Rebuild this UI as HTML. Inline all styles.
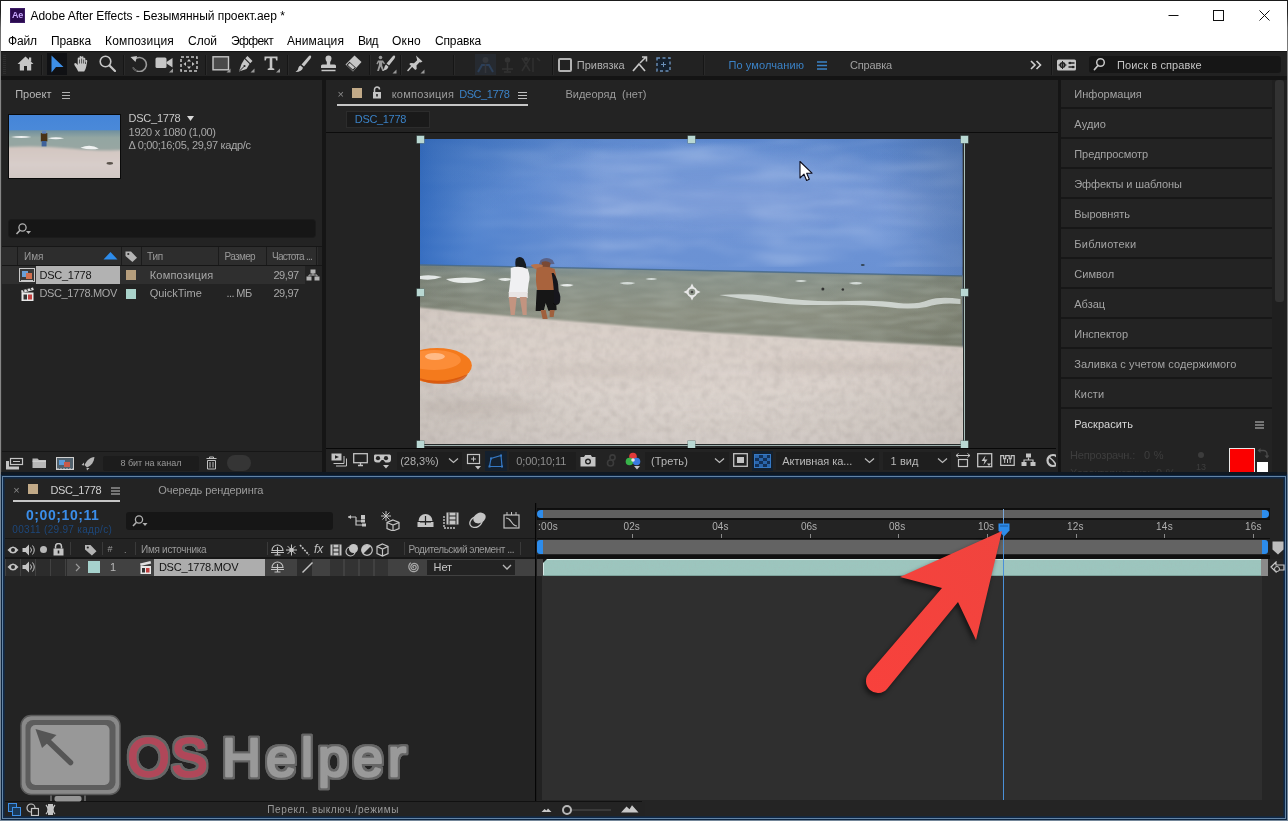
<!DOCTYPE html>
<html lang="ru"><head><meta charset="utf-8"><title>Adobe After Effects</title>
<style>

*{margin:0;padding:0;box-sizing:border-box}
html,body{width:1288px;height:821px;overflow:hidden;background:#151515}
body{font-family:"Liberation Sans",sans-serif}
#app{position:relative;width:1288px;height:821px;overflow:hidden;background:#151515;will-change:transform}
.b{position:absolute;display:block}
.t{position:absolute;white-space:nowrap;display:block}

</style></head>
<body>
<div id="app">
<div class="b" style="left:0px;top:0px;width:1288px;height:821px;background:#1b1b1b;"></div>
<div class="b" style="left:0px;top:0px;width:1288px;height:821px;background:#1b1b1b;background:linear-gradient(to bottom,#1b1b1b 0,#1f1f1f 12px,#6a6a6a 28px,#868686 60px,#868686 100%);"></div>
<div class="b" style="left:1px;top:0px;width:1286px;height:1px;background:#1b1b1b;"></div>
<div class="b" style="left:1px;top:51px;width:1286px;height:769px;background:#151515;"></div>
<div class="b" style="left:1px;top:1px;width:1286px;height:50px;background:#ffffff;"></div>
<div class="b" style="left:10px;top:8px;width:15px;height:15px;background:#2a0a4f;border:1px solid #3d1c66"></div>
<span class="t" style="left:12px;top:9px;font-size:9px;line-height:12px;color:#c9a9ff;font-weight:700;letter-spacing:-0.25px;">Ae</span>
<span class="t" style="left:30.5px;top:8px;font-size:12px;line-height:16px;color:#000;letter-spacing:-0.03px;">Adobe After Effects - Безымянный проект.aep *</span>
<svg class="b" style="left:1160px;top:1px;" width="128" height="30" viewBox="0 0 128 30"><path d="M8.5 14.5h10" stroke="#111" fill="none"/><rect x="53.5" y="9.5" width="10" height="10" stroke="#111" fill="none"/><path d="M99.5 9.5l10 10m0-10l-10 10" stroke="#111" fill="none"/></svg>
<span class="t" style="left:8px;top:33px;font-size:12px;line-height:16px;color:#000;letter-spacing:-0.13px;">Файл</span>
<span class="t" style="left:51px;top:33px;font-size:12px;line-height:16px;color:#000;letter-spacing:-0.09px;">Правка</span>
<span class="t" style="left:105px;top:33px;font-size:12px;line-height:16px;color:#000;letter-spacing:0.18px;">Композиция</span>
<span class="t" style="left:188px;top:33px;font-size:12px;line-height:16px;color:#000;letter-spacing:-0.04px;">Слой</span>
<span class="t" style="left:231px;top:33px;font-size:12px;line-height:16px;color:#000;letter-spacing:-0.65px;">Эффект</span>
<span class="t" style="left:287px;top:33px;font-size:12px;line-height:16px;color:#000;letter-spacing:0.08px;">Анимация</span>
<span class="t" style="left:358px;top:33px;font-size:12px;line-height:16px;color:#000;letter-spacing:-0.57px;">Вид</span>
<span class="t" style="left:392px;top:33px;font-size:12px;line-height:16px;color:#000;letter-spacing:0.28px;">Окно</span>
<span class="t" style="left:435px;top:33px;font-size:12px;line-height:16px;color:#000;letter-spacing:-0.15px;">Справка</span>
<div class="b" style="left:1px;top:51px;width:1286px;height:25px;background:#222222;"></div>
<div class="b" style="left:1px;top:76px;width:1286px;height:4px;background:#141414;"></div>
<div class="b" style="left:1px;top:51px;width:1286px;height:1px;background:#141414;"></div>
<div class="b" style="left:3px;top:55px;width:3px;height:1px;background:#2e2e2e;"></div>
<div class="b" style="left:3px;top:57px;width:3px;height:1px;background:#2e2e2e;"></div>
<div class="b" style="left:3px;top:59px;width:3px;height:1px;background:#2e2e2e;"></div>
<div class="b" style="left:3px;top:61px;width:3px;height:1px;background:#2e2e2e;"></div>
<div class="b" style="left:3px;top:63px;width:3px;height:1px;background:#2e2e2e;"></div>
<div class="b" style="left:3px;top:65px;width:3px;height:1px;background:#2e2e2e;"></div>
<div class="b" style="left:3px;top:67px;width:3px;height:1px;background:#2e2e2e;"></div>
<div class="b" style="left:3px;top:69px;width:3px;height:1px;background:#2e2e2e;"></div>
<div class="b" style="left:3px;top:71px;width:3px;height:1px;background:#2e2e2e;"></div>
<div class="b" style="left:3px;top:73px;width:3px;height:1px;background:#2e2e2e;"></div>
<div class="b" style="left:41px;top:55px;width:1px;height:20px;background:#161616;"></div>
<div class="b" style="left:42px;top:55px;width:1px;height:20px;background:#2a2a2a;"></div>
<div class="b" style="left:123px;top:55px;width:1px;height:20px;background:#161616;"></div>
<div class="b" style="left:124px;top:55px;width:1px;height:20px;background:#2a2a2a;"></div>
<div class="b" style="left:205px;top:55px;width:1px;height:20px;background:#161616;"></div>
<div class="b" style="left:206px;top:55px;width:1px;height:20px;background:#2a2a2a;"></div>
<div class="b" style="left:287px;top:55px;width:1px;height:20px;background:#161616;"></div>
<div class="b" style="left:288px;top:55px;width:1px;height:20px;background:#2a2a2a;"></div>
<div class="b" style="left:369px;top:55px;width:1px;height:20px;background:#161616;"></div>
<div class="b" style="left:370px;top:55px;width:1px;height:20px;background:#2a2a2a;"></div>
<div class="b" style="left:400px;top:55px;width:1px;height:20px;background:#161616;"></div>
<div class="b" style="left:401px;top:55px;width:1px;height:20px;background:#2a2a2a;"></div>
<div class="b" style="left:453px;top:55px;width:1px;height:20px;background:#161616;"></div>
<div class="b" style="left:454px;top:55px;width:1px;height:20px;background:#2a2a2a;"></div>
<div class="b" style="left:552px;top:55px;width:1px;height:20px;background:#161616;"></div>
<div class="b" style="left:553px;top:55px;width:1px;height:20px;background:#2a2a2a;"></div>
<div class="b" style="left:703px;top:55px;width:1px;height:20px;background:#161616;"></div>
<div class="b" style="left:704px;top:55px;width:1px;height:20px;background:#2a2a2a;"></div>
<div class="b" style="left:1051px;top:55px;width:1px;height:20px;background:#161616;"></div>
<div class="b" style="left:1052px;top:55px;width:1px;height:20px;background:#2a2a2a;"></div>
<svg class="b" style="left:17px;top:56px;" width="17" height="15" viewBox="0 0 17 15"><path d="M8.500 0.500L0.500 8h2.300v6.500h4.200v-4.500h3v4.500h4.200v-6.500h2.300z" fill="#c6c6c6"/><rect x="12" y="1.500" width="2.200" height="4" fill="#c6c6c6"/></svg>
<div class="b" style="left:47px;top:53px;width:20px;height:22px;background:#101114;"></div>
<svg class="b" style="left:51px;top:55px;" width="13" height="18" viewBox="0 0 13 18"><path d="M0.500 0.500v17l4.500-5.500h7.500z" fill="#3d8fe8"/></svg>
<svg class="b" style="left:74px;top:55px;" width="16" height="17" viewBox="0 0 16 17"><path d="M4.200 16.500q-1.200-2.800-3.500-6q-1-1.800.3-2.400q1.200-.2 2.700 2v-6.300q0-1.200.9-1.200t.9 1.200v-1.600q0-1.200 1-1.200t1 1.200v.3q0-1.200 1-1.200t1 1.200v1.300q0-1.100.9-1.100t.9 1.100v2.200q.3-1.200 1.200-1t.7 1.400l-.8 4.600q-.5 3-2.200 5.500z" fill="#c6c6c6"/><path d="M5.500 4.500v4M7.600 3.500v5M9.600 4.500v4M11.500 6.500v2.500" stroke="#232323" stroke-width=".7"/></svg>
<svg class="b" style="left:99px;top:55px;" width="17" height="17" viewBox="0 0 17 17"><circle cx="6.500" cy="6.500" r="5.300" fill="none" stroke="#c6c6c6" stroke-width="1.600"/><path d="M10.500 10.500l5.500 5.500" stroke="#c6c6c6" stroke-width="2.200" stroke-linecap="round"/></svg>
<svg class="b" style="left:130px;top:55px;" width="18" height="17" viewBox="0 0 18 17"><path d="M4.500 4.500a7 7 0 1 1-1.500 8" fill="none" stroke="#9a9a9a" stroke-width="1.600"/><path d="M0.500 2l6.500-1-1.500 6z" fill="#c6c6c6"/><path d="M3 12.500a7 7 0 0 0 4 3.500" fill="none" stroke="#555" stroke-width="1.600"/></svg>
<svg class="b" style="left:155px;top:56px;" width="19" height="17" viewBox="0 0 19 17"><rect x="0.500" y="1.500" width="11" height="10.500" rx="1.500" fill="#c6c6c6"/><path d="M11.500 6l6-4v9.500l-6-4z" fill="#c6c6c6"/><path d="M14 16.500h4v-4z" fill="#9a9a9a"/></svg>
<svg class="b" style="left:180px;top:56px;" width="18" height="16" viewBox="0 0 18 16"><rect x="1" y="1" width="16" height="14" fill="none" stroke="#c6c6c6" stroke-width="1.500" stroke-dasharray="3 2"/><path d="M9 3l2 2.500h-4zM9 13l2-2.500h-4zM3.500 8l2.500-2v4zM14.500 8l-2.500-2v4z" fill="#c6c6c6"/></svg>
<svg class="b" style="left:212px;top:56px;" width="19" height="17" viewBox="0 0 19 17"><rect x="1" y="0.800" width="15.500" height="13" fill="#4a4a4a" stroke="#c6c6c6" stroke-width="1.400"/><path d="M14.500 16.500h4v-4z" fill="#9a9a9a"/></svg>
<svg class="b" style="left:238px;top:55px;" width="17" height="18" viewBox="0 0 17 18"><path d="M9.500 1l5 5-2.200 2.200-5-5z" fill="#c6c6c6"/><path d="M6.500 4l5 5-3 5-7.500 2.500 2.500-7.500z" fill="#c6c6c6"/><path d="M1.500 16l4.500-4.500" stroke="#232323" stroke-width="1"/><circle cx="6.500" cy="11" r="1.100" fill="#232323"/><path d="M12.500 17.500h4v-4z" fill="#9a9a9a"/></svg>
<svg class="b" style="left:264px;top:56px;" width="16" height="17" viewBox="0 0 16 17"><path d="M0.500 0.500h13v4h-1.300l-.7-2.200h-3.200v9.700l2 .7v1.300h-6.600v-1.300l2-.7v-9.700h-3.200l-.7 2.200h-1.300z" fill="#c6c6c6"/><path d="M12 16.500h4v-4z" fill="#9a9a9a"/></svg>
<svg class="b" style="left:295px;top:55px;" width="17" height="18" viewBox="0 0 17 18"><path d="M15.500 0.500q1.500 1 0 3l-6.500 8-2.500-2 7-8q1-1.500 2-1z" fill="#c6c6c6"/><path d="M5.500 10.500l2.500 2.200q-1 4-7.500 4.300q3-2 3-4.500q.5-1.500 2-2z" fill="#c6c6c6"/></svg>
<svg class="b" style="left:320px;top:55px;" width="17" height="17" viewBox="0 0 17 17"><path d="M8.500 0.500a3 3 0 0 1 3 3q0 1.500-1.300 3.500v2.500h4.300q1.500 0 1.500 1.500v2h-15v-2q0-1.500 1.500-1.500h4.300v-2.500q-1.300-2-1.300-3.500a3 3 0 0 1 3-3z" fill="#c6c6c6"/><path d="M1.500 15.500h14" stroke="#c6c6c6" stroke-width="1.500"/></svg>
<svg class="b" style="left:345px;top:55px;" width="17" height="17" viewBox="0 0 17 17"><path d="M9.500 0.500l7 6.500-8.500 9.500-7.500-7z" fill="#c6c6c6"/><path d="M1.500 10l3-3.200 6.500 6-3 3.200z" fill="#232323"/><path d="M2.800 10l2-2 5 4.600-2 2z" fill="#c6c6c6"/></svg>
<svg class="b" style="left:376px;top:55px;" width="21" height="19" viewBox="0 0 21 19"><circle cx="4.500" cy="2.500" r="1.800" fill="#9a9a9a"/><path d="M2 5.500h5l2 3-1 .8-1.800-2v3.200l2 5.500h-1.800l-2-4.500-1.500 4.500h-1.800l1.800-6v-3l-1.500 2.500-1-.8z" fill="#9a9a9a"/><path d="M18.500 0.500q1.500 1 0 3l-5.500 7-2.500-2 6-7q1-1.500 2-1z" fill="#c6c6c6"/><path d="M10 9.500l2.500 2.200q-1 3.500-6 3.800q2-1.500 2-3.500q.3-1.500 1.500-2.500z" fill="#c6c6c6"/><path d="M16.500 18.500h4v-4z" fill="#9a9a9a"/></svg>
<svg class="b" style="left:407px;top:55px;" width="18" height="19" viewBox="0 0 18 19"><path d="M9 0.500l6.500 6-1.800 1-1.200-.3-3 3.300.2 3.500-1.500 1-6-6 1.500-1 3.300.3 3.200-3-.3-1.300z" fill="#c6c6c6"/><path d="M5 11l-4 4.500" stroke="#c6c6c6" stroke-width="1.500" stroke-linecap="round"/><path d="M13.500 18.500h4v-4z" fill="#9a9a9a"/></svg>
<div class="b" style="left:475px;top:54px;width:21px;height:21px;background:#262a30;"></div>
<svg class="b" style="left:476px;top:55px;" width="19" height="19" viewBox="0 0 19 19"><circle cx="9.500" cy="5" r="3" fill="#34373c"/><path d="M2 17l4-7h7l4 7" fill="none" stroke="#2c3f58" stroke-width="2"/><path d="M9.500 9v9" stroke="#34373c" stroke-width="1.500"/></svg>
<svg class="b" style="left:500px;top:55px;" width="15" height="19" viewBox="0 0 15 19"><circle cx="7.500" cy="5" r="2.800" fill="#333"/><path d="M2 14h11M7.500 8v8M4 17h7" stroke="#333" stroke-width="1.600" fill="none"/></svg>
<svg class="b" style="left:519px;top:55px;" width="22" height="19" viewBox="0 0 22 19"><path d="M3 3l8 13M11 3l-8 13M14 3v14M18 3l3 3" stroke="#303030" stroke-width="1.600" fill="none"/><circle cx="7" cy="4" r="2" fill="#333"/></svg>
<div class="b" style="left:558px;top:58px;width:14px;height:14px;border:2px solid #b2b2b2;border-radius:2px"></div>
<span class="t" style="left:576.8px;top:58px;font-size:11px;line-height:14px;color:#b0b0b0;letter-spacing:-0.03px;">Привязка</span>
<svg class="b" style="left:631px;top:56px;" width="17" height="17" viewBox="0 0 17 17"><path d="M2 15l6-7 6 7" fill="none" stroke="#c6c6c6" stroke-width="1.700"/><path d="M9 7l6-6M11 1h4.500v4.500" fill="none" stroke="#c6c6c6" stroke-width="1.500"/></svg>
<svg class="b" style="left:656px;top:57px;" width="15" height="15" viewBox="0 0 15 15"><rect x="1" y="1" width="13" height="13" fill="#14202e" stroke="#6a8fb8" stroke-width="1.400" stroke-dasharray="3 2.500"/><path d="M5 7.500h5M7.500 5v5" stroke="#6a8fb8"/></svg>
<span class="t" style="left:728.5px;top:58px;font-size:11px;line-height:14px;color:#3b82c6;letter-spacing:0.09px;">По умолчанию</span>
<svg class="b" style="left:817px;top:61px;" width="10" height="9" viewBox="0 0 10 9"><path d="M0 1h10M0 4.500h10M0 8h10" stroke="#3b82c6" stroke-width="1.300"/></svg>
<span class="t" style="left:850px;top:58px;font-size:11px;line-height:14px;color:#a0a0a0;letter-spacing:-0.16px;">Справка</span>
<svg class="b" style="left:1030px;top:60px;" width="12" height="10" viewBox="0 0 12 10"><path d="M1 1l4 4-4 4M6.500 1l4 4-4 4" fill="none" stroke="#d0d0d0" stroke-width="1.600"/></svg>
<svg class="b" style="left:1057px;top:59px;" width="20" height="12" viewBox="0 0 20 12"><rect x="0" y="0.500" width="19" height="11" rx="1.500" fill="#c6c6c6"/><circle cx="5.500" cy="6" r="2.300" fill="none" stroke="#232323" stroke-width="1.500"/><path d="M5.500 2v8M1.500 6h8" stroke="#232323" stroke-width="1"/><path d="M11.500 4h6M11.500 8h6" stroke="#232323" stroke-width="1.400"/><circle cx="13" cy="4" r="1.200" fill="#232323"/><circle cx="16" cy="8" r="1.200" fill="#232323"/></svg>
<div class="b" style="left:1089px;top:56px;width:192px;height:17px;background:#161616;border-radius:3px"></div>
<svg class="b" style="left:1093px;top:57px;" width="13" height="14" viewBox="0 0 13 14"><circle cx="7.500" cy="5.500" r="3.800" fill="none" stroke="#c6c6c6" stroke-width="1.500"/><path d="M5 8.500l-3.500 4" stroke="#c6c6c6" stroke-width="1.800" stroke-linecap="round"/></svg>
<span class="t" style="left:1117px;top:58px;font-size:11px;line-height:14px;color:#c4c4c4;letter-spacing:0.12px;">Поиск в справке</span>
<div class="b" style="left:1px;top:80px;width:1px;height:392px;background:#2e2e2e;"></div>
<div class="b" style="left:2px;top:80px;width:320px;height:392px;background:#232323;"></div>
<span class="t" style="left:15.2px;top:87px;font-size:11px;line-height:14px;color:#b8b8b8;letter-spacing:0.01px;">Проект</span>
<svg class="b" style="left:62px;top:91px;" width="9" height="8" viewBox="0 0 9 8"><path d="M0 1.5h8M0 4.5h8M0 7.5h8" stroke="#b0b0b0" stroke-width="1"/></svg>
<div class="b" style="left:8px;top:114px;width:113px;height:65px;background:#0a0a0a;"></div>
<svg class="b" style="left:9px;top:115px" width="111" height="63" viewBox="0 0 544 305" preserveAspectRatio="none"><defs><linearGradient id="tsky" x1="0" y1="0" x2="0" y2="1"><stop offset="0" stop-color="#4585d8"/><stop offset="1" stop-color="#5b97dc"/></linearGradient><linearGradient id="tsea" x1="0" y1="0" x2="0" y2="1"><stop offset="0" stop-color="#6f8f9e"/><stop offset="0.3" stop-color="#93a6a2"/><stop offset="1" stop-color="#9aa6a2"/></linearGradient><linearGradient id="tsand" x1="0" y1="0" x2="0" y2="1"><stop offset="0" stop-color="#d2c6c0"/><stop offset="0.5" stop-color="#d8cdca"/><stop offset="1" stop-color="#cfc6c2"/></linearGradient><filter id="tbl" x="-10%" y="-10%" width="120%" height="120%"><feGaussianBlur stdDeviation="5"/></filter></defs><rect width="544" height="305" fill="url(#tsky)"/><rect y="74" width="544" height="120" fill="url(#tsea)"/><filter id="tbl2" x="-10%" y="-10%" width="120%" height="120%"><feGaussianBlur stdDeviation="2.200"/></filter><path d="M-20 156 Q150 148 300 162 T564 170 L564 325 L-20 325Z" fill="url(#tsand)" filter="url(#tbl)"/><g filter="url(#tbl2)"><path d="M10 106 q50 -8 100 0 q-50 10 -100 0z M190 112 q40 -8 80 0 q-40 10 -80 0z M350 158 q50 -20 90 4 q-40 10 -90 -4z" fill="#f0f2f2"/><rect x="156" y="88" width="32" height="40" fill="#4a3214"/><rect x="160" y="126" width="24" height="26" fill="#3f629a"/><rect x="162" y="78" width="20" height="12" fill="#5a80c0"/><ellipse cx="494" cy="234" rx="16" ry="7" fill="#5a524c"/></g></svg>
<span class="t" style="left:128.6px;top:111px;font-size:11px;line-height:14px;color:#c8c8c8;letter-spacing:-0.25px;">DSC_1778</span>
<svg class="b" style="left:187px;top:116px;" width="8" height="6" viewBox="0 0 8 6"><path d="M0 0h7l-3.5 5z" fill="#d8d8d8"/></svg>
<span class="t" style="left:128.6px;top:125px;font-size:11px;line-height:14px;color:#a7a7a7;letter-spacing:-0.29px;">1920 x 1080 (1,00)</span>
<span class="t" style="left:128.6px;top:138px;font-size:11px;line-height:14px;color:#a7a7a7;letter-spacing:-0.33px;">Δ 0;00;16;05, 29,97 кадр/с</span>
<div class="b" style="left:9px;top:220px;width:306px;height:17px;background:#161616;border-radius:3px;box-shadow:0 0 0 1px #1b1b1b"></div>
<svg class="b" style="left:15px;top:222px;" width="17" height="14" viewBox="0 0 17 14"><circle cx="7.5" cy="5.5" r="3.6" fill="none" stroke="#b0b0b0" stroke-width="1.3"/><path d="M5 8.2L1.5 12" stroke="#b0b0b0" stroke-width="1.6"/><path d="M11 9h5l-2.5 3z" fill="#b0b0b0"/></svg>
<div class="b" style="left:2px;top:246px;width:320px;height:1px;background:#161616;"></div>
<div class="b" style="left:2px;top:247px;width:316px;height:18px;background:#2d2d2d;"></div>
<div class="b" style="left:2px;top:265px;width:320px;height:1px;background:#161616;"></div>
<div class="b" style="left:17px;top:247px;width:1px;height:18px;background:#1b1b1b;"></div>
<div class="b" style="left:121px;top:247px;width:1px;height:18px;background:#1b1b1b;"></div>
<div class="b" style="left:141px;top:247px;width:1px;height:18px;background:#1b1b1b;"></div>
<div class="b" style="left:218px;top:247px;width:1px;height:18px;background:#1b1b1b;"></div>
<div class="b" style="left:266px;top:247px;width:1px;height:18px;background:#1b1b1b;"></div>
<div class="b" style="left:316px;top:247px;width:1px;height:18px;background:#1b1b1b;"></div>
<span class="t" style="left:24px;top:250px;font-size:10px;line-height:13px;color:#9a9a9a;letter-spacing:-0.06px;">Имя</span>
<svg class="b" style="left:103px;top:251px;" width="15" height="9" viewBox="0 0 15 9"><path d="M0.5 8.5L7.5 1L14.5 8.5z" fill="#2d8ceb"/></svg>
<svg class="b" style="left:124px;top:249px;" width="14" height="14" viewBox="0 0 14 14"><path d="M1.5 2.5h5.5l6 6.2-4.6 4.3-6.9-6z" fill="#b4b4b4"/><circle cx="4.3" cy="5" r="1.1" fill="#2d2d2d"/></svg>
<span class="t" style="left:147px;top:250px;font-size:10px;line-height:13px;color:#9a9a9a;letter-spacing:-0.22px;">Тип</span>
<span class="t" style="left:224.5px;top:250px;font-size:10px;line-height:13px;color:#9a9a9a;letter-spacing:-0.65px;">Размер</span>
<span class="t" style="left:272px;top:250px;font-size:10px;line-height:13px;color:#9a9a9a;letter-spacing:-0.74px;">Частота ...</span>
<div class="b" style="left:2px;top:266px;width:303px;height:18px;background:#2f2f2f;"></div>
<div class="b" style="left:36px;top:266px;width:84px;height:18px;background:#b2b2b2;"></div>
<svg class="b" style="left:19px;top:268px;" width="16" height="14" viewBox="0 0 16 14"><rect x="0.5" y="0.5" width="15" height="13" fill="#3a3a3a" stroke="#c8c8c8"/><rect x="3" y="3" width="6" height="6" fill="#6aa0d8"/><rect x="7" y="5" width="6" height="6" fill="#d07050"/><path d="M2 12.5h12" stroke="#c8c8c8"/></svg>
<span class="t" style="left:39.5px;top:268px;font-size:11px;line-height:14px;color:#151515;letter-spacing:-0.26px;">DSC_1778</span>
<div class="b" style="left:126px;top:270px;width:10px;height:10px;background:#b59d7c;"></div>
<span class="t" style="left:149.7px;top:268px;font-size:11px;line-height:14px;color:#a7a7a7;letter-spacing:0.22px;">Композиция</span>
<span class="t" style="left:273.4px;top:268px;font-size:11px;line-height:14px;color:#a7a7a7;letter-spacing:-0.43px;">29,97</span>
<svg class="b" style="left:306px;top:269px;" width="14" height="12" viewBox="0 0 14 12"><rect x="4.5" y="0.5" width="5" height="4" fill="#b4b4b4"/><rect x="0.5" y="7.5" width="5" height="4" fill="#b4b4b4"/><rect x="8.5" y="7.5" width="5" height="4" fill="#b4b4b4"/><path d="M7 4v2.5M3 7.5V6h8v1.5" stroke="#b4b4b4" fill="none"/></svg>
<svg class="b" style="left:20px;top:286px;" width="15" height="16" viewBox="0 0 15 16"><path d="M1 4.5l12-3 .8 2.5-12 3z" fill="#e0e0e0"/><rect x="1.5" y="6.5" width="12" height="8.5" fill="#e8e8e8"/><rect x="3.5" y="8.5" width="3.5" height="5" fill="#333"/><rect x="8" y="8.5" width="4" height="5" fill="#c04040"/><path d="M3 3.6l1.2 2M6.5 2.8l1.2 2M10 2l1.2 2" stroke="#333" stroke-width="1.2"/></svg>
<span class="t" style="left:39.5px;top:286px;font-size:11px;line-height:14px;color:#a7a7a7;letter-spacing:-0.37px;">DSC_1778.MOV</span>
<div class="b" style="left:126px;top:289px;width:10px;height:10px;background:#a9d2ca;"></div>
<span class="t" style="left:149.7px;top:286px;font-size:11px;line-height:14px;color:#a7a7a7;letter-spacing:-0.01px;">QuickTime</span>
<span class="t" style="left:226.6px;top:286px;font-size:11px;line-height:14px;color:#a7a7a7;letter-spacing:-0.62px;">... МБ</span>
<span class="t" style="left:273.4px;top:286px;font-size:11px;line-height:14px;color:#a7a7a7;letter-spacing:-0.43px;">29,97</span>
<div class="b" style="left:2px;top:451px;width:320px;height:1px;background:#161616;"></div>
<svg class="b" style="left:5px;top:456px;" width="19" height="15" viewBox="0 0 19 15"><rect x="5.5" y="2.5" width="12" height="6" fill="none" stroke="#c4c4c4" stroke-width="1.2"/><path d="M8 5.5h7" stroke="#c4c4c4"/><rect x="1" y="5" width="3" height="8.5" fill="#c4c4c4"/><rect x="4" y="10.5" width="10" height="3" fill="#c4c4c4"/></svg>
<svg class="b" style="left:32px;top:457px;" width="15" height="12" viewBox="0 0 15 12"><path d="M0.5 1.5h5l1.5 1.5h7v8h-13.5z" fill="#b8b8b8"/><path d="M0.5 4.2h13.5" stroke="#d8d8d8" stroke-width="1"/></svg>
<svg class="b" style="left:56px;top:456px;" width="18" height="15" viewBox="0 0 18 15"><rect x="0.5" y="1.5" width="17" height="12" fill="#50606c" stroke="#d0d0d0"/><rect x="3" y="4" width="6" height="5" fill="#5a9ad8"/><rect x="8" y="6" width="6" height="5" fill="#c85a4a"/><path d="M1 13h16" stroke="#d0d0d0" stroke-dasharray="2 1"/></svg>
<svg class="b" style="left:81px;top:456px;" width="15" height="15" viewBox="0 0 15 15"><path d="M13.5 1C9 1.5 5.5 4.5 3.5 9l2.5 2.5c4.5-2 7-5.500 7.500-10.500z" fill="#b4b4b4"/><path d="M3 6.500L0.500 9l2.500.5zM8.500 12l-2.500 2.500-.5-2.500z" fill="#b4b4b4"/></svg>
<div class="b" style="left:103px;top:456px;width:96px;height:15px;background:#1c1c1c;border-radius:2px"></div>
<span class="t" style="left:120.4px;top:457px;font-size:9px;line-height:12px;color:#9a9a9a;letter-spacing:-0.01px;">8 бит на канал</span>
<svg class="b" style="left:206px;top:456px;" width="11" height="14" viewBox="0 0 11 14"><path d="M0.5 2.500h10M3.500 2.500v-1.500h4v1.500" stroke="#c0c0c0" fill="none"/><path d="M1.500 4.500h8v8.500h-8z" fill="none" stroke="#c0c0c0"/><path d="M4 6v5.500M7 6v5.500" stroke="#c0c0c0"/></svg>
<div class="b" style="left:227px;top:455px;width:24px;height:16px;background:#353535;border-radius:8px"></div>
<div class="b" style="left:326px;top:80px;width:732px;height:392px;background:#232323;"></div>
<span class="t" style="left:337.5px;top:87px;font-size:11px;line-height:14px;color:#8a8a8a;">×</span>
<div class="b" style="left:352px;top:88px;width:10px;height:10px;background:#c2aa88;"></div>
<svg class="b" style="left:372px;top:86px;" width="10" height="13" viewBox="0 0 10 13"><rect x="1" y="6" width="8" height="6.500" fill="#c4c4c4"/><path d="M2.500 6V3.500a2.500 2.500 0 0 1 5 0" fill="none" stroke="#c4c4c4" stroke-width="1.500"/><rect x="4.200" y="8" width="1.600" height="2.500" fill="#232323"/></svg>
<span class="t" style="left:391.7px;top:87px;font-size:11px;line-height:14px;color:#9c9c9c;letter-spacing:0.23px;">композиция</span>
<span class="t" style="left:459.2px;top:87px;font-size:11px;line-height:14px;color:#3b82c6;letter-spacing:-0.45px;">DSC_1778</span>
<svg class="b" style="left:518px;top:91px;" width="9" height="8" viewBox="0 0 9 8"><path d="M0 1.500h9M0 4.500h9M0 7.500h9" stroke="#c0c0c0" stroke-width="1"/></svg>
<div class="b" style="left:337px;top:104px;width:191px;height:2px;background:#c6c6c6;"></div>
<span class="t" style="left:565.4px;top:87px;font-size:11px;line-height:14px;color:#9c9c9c;letter-spacing:0.01px;">Видеоряд</span>
<span class="t" style="left:622px;top:87px;font-size:11px;line-height:14px;color:#9c9c9c;letter-spacing:0.06px;">(нет)</span>
<div class="b" style="left:346px;top:111px;width:84px;height:17px;background:#1a1a1a;border:1px solid #2c2c2c"></div>
<span class="t" style="left:354.8px;top:112px;font-size:11px;line-height:14px;color:#3b82c6;letter-spacing:-0.33px;">DSC_1778</span>
<div class="b" style="left:326px;top:132px;width:732px;height:1px;background:#0c0c0c;"></div>
<div class="b" style="left:420px;top:139px;width:1px;height:306px;background:#1a1a1a;"></div>
<svg class="b" style="left:420px;top:138.500px" width="542.500" height="305" viewBox="0 0 544 305" preserveAspectRatio="none"><defs>
<linearGradient id="csky" x1="0" y1="0" x2="0" y2="1"><stop offset="0" stop-color="#5a87cf"/><stop offset="0.25" stop-color="#6d93d5"/><stop offset="0.6" stop-color="#6890d2"/><stop offset="0.85" stop-color="#5588cb"/><stop offset="1" stop-color="#4a82c5"/></linearGradient>
<radialGradient id="ccl" cx="0.56" cy="0.40" r="0.55" gradientTransform="translate(0 0.12) scale(1 0.7)"><stop offset="0" stop-color="#7c9cd8" stop-opacity="0.7"/><stop offset="0.6" stop-color="#7899d6" stop-opacity="0.35"/><stop offset="1" stop-color="#7a9bd6" stop-opacity="0"/></radialGradient>
<linearGradient id="clf" x1="0" y1="0" x2="1" y2="0"><stop offset="0" stop-color="#2a68c2" stop-opacity="0.8"/><stop offset="0.1" stop-color="#3370c6" stop-opacity="0.5"/><stop offset="0.34" stop-color="#3a74c4" stop-opacity="0"/><stop offset="0.85" stop-color="#4a6ea6" stop-opacity="0"/><stop offset="1" stop-color="#466ca6" stop-opacity="0.4"/></linearGradient>
<linearGradient id="csea" x1="0" y1="0" x2="0" y2="1"><stop offset="0" stop-color="#778b90"/><stop offset="0.15" stop-color="#879188"/><stop offset="0.55" stop-color="#8c9082"/><stop offset="1" stop-color="#83877a"/></linearGradient>
<linearGradient id="cseax" x1="0" y1="0" x2="1" y2="0"><stop offset="0" stop-color="#6f7466" stop-opacity="0.5"/><stop offset="0.25" stop-color="#6f7466" stop-opacity="0"/><stop offset="0.75" stop-color="#6a6e5c" stop-opacity="0"/><stop offset="1" stop-color="#6a6e5c" stop-opacity="0.45"/></linearGradient>
<linearGradient id="csand" x1="0" y1="0" x2="0" y2="1"><stop offset="0" stop-color="#d8cec7"/><stop offset="0.5" stop-color="#dcd3cd"/><stop offset="1" stop-color="#dbd3ce"/></linearGradient>
<radialGradient id="cvg" cx="0.5" cy="0.45" r="0.75"><stop offset="0.55" stop-color="#000" stop-opacity="0"/><stop offset="1" stop-color="#1a1410" stop-opacity="0.10"/></radialGradient>
<filter id="cbl" x="-20%" y="-20%" width="140%" height="140%"><feGaussianBlur stdDeviation="1.1"/></filter>
<filter id="cbl2" x="-20%" y="-20%" width="140%" height="140%"><feGaussianBlur stdDeviation="0.6"/></filter>
<filter id="cbl3" x="-30%" y="-30%" width="160%" height="160%"><feGaussianBlur stdDeviation="5"/></filter>
<filter id="cbl4" x="-30%" y="-60%" width="160%" height="220%"><feGaussianBlur stdDeviation="9"/></filter>
<filter id="ctx" x="0" y="0" width="100%" height="100%"><feTurbulence type="fractalNoise" baseFrequency="0.11 0.16" numOctaves="3" seed="7" result="n"/><feColorMatrix in="n" type="matrix" values="0 0 0 0 0.52  0 0 0 0 0.47  0 0 0 0 0.44  1.4 1.4 0 0 -1.15"/><feGaussianBlur stdDeviation="0.8"/></filter>
<filter id="ctx3" x="0" y="0" width="100%" height="100%"><feTurbulence type="fractalNoise" baseFrequency="0.03 0.22" numOctaves="2" seed="11" result="n"/><feColorMatrix in="n" type="matrix" values="0 0 0 0 0.42  0 0 0 0 0.46  0 0 0 0 0.40  1.5 1.5 0 0 -1.2"/><feGaussianBlur stdDeviation="0.9"/></filter>
<clipPath id="cwc"><path d="M0 127 L544 138 L544 212 L0 172Z"/></clipPath>
<filter id="ctx2" x="0" y="0" width="100%" height="100%"><feTurbulence type="fractalNoise" baseFrequency="0.012 0.09" numOctaves="3" seed="3" result="n"/><feColorMatrix in="n" type="matrix" values="0 0 0 0 0.62  0 0 0 0 0.72  0 0 0 0 0.92  1.6 1.6 0 0 -1.35"/><feGaussianBlur stdDeviation="2"/></filter>
<clipPath id="csc"><path d="M-5 170 L137 183 L270 194 L407 202.500 L549 210 L549 310 L-5 310Z"/></clipPath>
</defs>
<rect width="544" height="305" fill="url(#csky)"/>
<rect width="544" height="140" fill="url(#ccl)"/>
<g filter="url(#cbl4)" opacity="0.4"><ellipse cx="250" cy="22" rx="190" ry="10" fill="#8fabdf"/><ellipse cx="330" cy="62" rx="200" ry="16" fill="#8aa6dc"/><ellipse cx="120" cy="45" rx="60" ry="9" fill="#7d9edb"/></g>
<rect width="544" height="128" filter="url(#ctx2)" opacity="0.28"/>
<rect width="544" height="140" fill="url(#clf)"/>
<path d="M0 125.500 L544 136.500 L544 215 L0 175Z" fill="url(#csea)"/>
<path d="M0 125.500 L544 136.500 L544 215 L0 175Z" fill="url(#cseax)"/>
<g clip-path="url(#cwc)"><rect y="120" width="544" height="100" filter="url(#ctx3)" opacity="0.4"/></g>
<path d="M0 125.800 L544 136.800" stroke="#3f668f" stroke-width="1.300" fill="none" opacity="0.750"/>
<path d="M-5 168 L40 173 L137 181 L270 192 L407 200.500 L549 208 L549 310 L-5 310Z" fill="url(#csand)" filter="url(#cbl)"/>
<g filter="url(#cbl2)">
<path d="M0 137 q10 -2 22 1 q-10 4 -22 2z M26 140 q18 -3 40 0 q-6 4 -22 4 q-12 0 -18 -4z M78 140 q8 -2 14 0 q-6 4 -14 0z M140 146 q8 -2 14 0 q-6 3 -14 0z" fill="#e8ecea"/>
<path d="M200 144 q8 -2 16 0 q-8 3 -16 0z M226 140 q6 -2 12 0 q-6 2 -12 0z M376 142 q6 -2 12 0 q-6 2 -12 0z M430 144 q8 -2 14 0 q-6 3 -14 0z" fill="#dfe6e4" opacity="0.850"/>
<path d="M300 156 q30 -2 56 2 q30 5 74 4 q30 -1 50 2 q18 2 30 -3 q12 -4 32 -1 l0 5 q-20 -2 -34 3 q-18 3 -40 0 q-30 -3 -60 -2 q-50 1 -108 -10z" fill="#dde4e0" opacity="0.800"/>
<circle cx="404" cy="150" r="1.500" fill="#333"/><circle cx="424" cy="150.500" r="1.300" fill="#333"/><ellipse cx="444" cy="126" rx="2" ry="1" fill="#345"/>
</g>
<g filter="url(#cbl3)" opacity="0.500"><ellipse cx="190" cy="232" rx="90" ry="7" fill="#c8beb6"/><ellipse cx="420" cy="228" rx="90" ry="6" fill="#c2b7af"/><ellipse cx="60" cy="268" rx="60" ry="8" fill="#c6bbb4"/><ellipse cx="300" cy="270" rx="160" ry="12" fill="#dbd3ce"/></g>
<g clip-path="url(#csc)"><rect y="165" width="544" height="140" filter="url(#ctx)" opacity="0.55"/></g>
<rect width="544" height="305" fill="url(#cvg)"/>
<g filter="url(#cbl2)">
<ellipse cx="17" cy="226.500" rx="35" ry="17.500" fill="#f47a1e"/>
<ellipse cx="14" cy="221" rx="27" ry="10" fill="#fd8f3c" opacity="0.900"/>
<ellipse cx="15" cy="217.500" rx="10" ry="3.500" fill="#ffc59a" opacity="0.800"/>
<path d="M-4 238 q24 9 52 -3 q-4 9 -24 10 q-18 1 -28 -7z" fill="#d2500a" opacity="0.750"/>
</g>
<g filter="url(#cbl2)">
<path d="M96 120 q4 -4 8 0 q3 5 3 11 l-5 4 l-6 -6 q-1 -5 0 -9z" fill="#191a20"/>
<path d="M91 129 q8 -3 17 1 q3 8 1 14 q-1 6 -1 10 l-19 0 q1 -8 2 -16z" fill="#f0f0f2"/>
<path d="M89 153 l19 0 l0 6 l-19 0z" fill="#e8e4e4"/>
<path d="M89 158 l8 0 l-2 18 l-4 0z M100 158 l7 0 l0 18 l-4 0z" fill="#c39480"/>
<path d="M121 121 q6 -4 12 0 l2 4 l-16 1z" fill="#5a6288"/>
<path d="M122 123 q5 -2 9 1 l-1 5 l-8 0z" fill="#7a4a34"/>
<path d="M111 126 q6 -2 12 0 l0 5 q-8 1 -12 -5z" fill="#b8724a"/>
<path d="M117 129 q9 -3 18 1 q3 10 1 22 l-18 0 q-3 -10 -1 -23z" fill="#a9633e"/>
<path d="M117 151 l19 0 l1 20 l-8 1 l-3 -8 l-2 8 l-8 0z" fill="#121212"/>
<path d="M134 134 q5 6 5 18 q3 6 1 12 q-3 4 -6 0 q1 -14 -2 -30z" fill="#17171a"/>
<path d="M121 171 l5 0 l2 9 l-5 0z M130 171 l5 0 l-1 7 l-4 0z" fill="#a0603c"/>
</g>
</svg>
<div class="b" style="left:963px;top:139px;width:1px;height:306px;background:#2a2e2e;"></div>
<div class="b" style="left:964px;top:139px;width:1px;height:307px;background:#a9bfbb;"></div>
<div class="b" style="left:420px;top:444px;width:544px;height:1px;background:#262a2a;"></div>
<div class="b" style="left:420px;top:445px;width:545px;height:1px;background:#9fb0ad;"></div>
<div class="b" style="left:416.5px;top:136.0px;width:7px;height:7px;background:#b9d8d3;box-shadow:0 0 0 .5px #6d8582"></div>
<div class="b" style="left:688.0px;top:136.0px;width:7px;height:7px;background:#b9d8d3;box-shadow:0 0 0 .5px #6d8582"></div>
<div class="b" style="left:960.5px;top:136.0px;width:7px;height:7px;background:#b9d8d3;box-shadow:0 0 0 .5px #6d8582"></div>
<div class="b" style="left:416.5px;top:288.5px;width:7px;height:7px;background:#b9d8d3;box-shadow:0 0 0 .5px #6d8582"></div>
<div class="b" style="left:960.5px;top:288.5px;width:7px;height:7px;background:#b9d8d3;box-shadow:0 0 0 .5px #6d8582"></div>
<div class="b" style="left:416.5px;top:441.0px;width:7px;height:7px;background:#b9d8d3;box-shadow:0 0 0 .5px #6d8582"></div>
<div class="b" style="left:688.0px;top:441.0px;width:7px;height:7px;background:#b9d8d3;box-shadow:0 0 0 .5px #6d8582"></div>
<div class="b" style="left:960.5px;top:441.0px;width:7px;height:7px;background:#b9d8d3;box-shadow:0 0 0 .5px #6d8582"></div>
<svg class="b" style="left:683px;top:283px;" width="18" height="18" viewBox="0 0 18 18"><circle cx="9" cy="9" r="4.300" fill="none" stroke="#e8e8e8" stroke-width="2"/><path d="M9 0.500l2 4h-4zM9 17.500l2-4h-4zM0.500 9l4-2v4zM17.500 9l-4-2v4z" fill="#e8e8e8"/><circle cx="9" cy="9" r="1.300" fill="#444"/></svg>
<svg class="b" style="left:798px;top:160px;" width="15" height="23" viewBox="0 0 15 23"><path d="M2 1.500v16.500l4-3.800 2.600 6.300 2.700-1.200-2.600-6.100h5.300z" fill="#fff" stroke="#0a0a1a" stroke-width="1.100" stroke-linejoin="round"/></svg>
<div class="b" style="left:326px;top:448px;width:730px;height:1px;background:#080808;"></div>
<svg class="b" style="left:331px;top:453px;" width="16" height="14" viewBox="0 0 16 14"><rect x="0.500" y="0.500" width="10" height="7" fill="#c4c4c4"/><path d="M13 3v7.500h-10.500" fill="none" stroke="#c4c4c4"/><path d="M15.500 5.500v7.500h-10.500" fill="none" stroke="#c4c4c4"/><path d="M4 2.200l4 1.800-4 1.800z" fill="#232323"/></svg>
<svg class="b" style="left:353px;top:453px;" width="15" height="14" viewBox="0 0 15 14"><rect x="0.700" y="0.700" width="13.600" height="9" fill="none" stroke="#c4c4c4" stroke-width="1.300"/><path d="M5 12.500h5M7.500 10v2.500" stroke="#c4c4c4" stroke-width="1.300"/></svg>
<svg class="b" style="left:373px;top:453px;" width="18" height="16" viewBox="0 0 18 16"><path d="M1.500 1.500h15a1.500 1.500 0 0 1 1.500 1.500v3.500q0 3-3 3h-2.500l-2.200-2.500h-1.600l-2.200 2.500h-2.500q-3 0-3-3v-3.500a1.500 1.500 0 0 1 1-1.500z" fill="#c4c4c4"/><circle cx="5" cy="5.200" r="2.100" fill="#232323"/><circle cx="13" cy="5.200" r="2.100" fill="#232323"/><path d="M10 12h6l-3 3.500z" fill="#c4c4c4"/></svg>
<div class="b" style="left:397px;top:452px;width:65px;height:18px;background:#1e1e1e;"></div>
<span class="t" style="left:400.2px;top:454px;font-size:11px;line-height:14px;color:#b0b0b0;letter-spacing:-0.02px;">(28,3%)</span>
<svg class="b" style="left:448px;top:457px;" width="11" height="7" viewBox="0 0 11 7"><path d="M1 1.500l4.500 4 4.500-4" fill="none" stroke="#b8b8b8" stroke-width="1.300"/></svg>
<svg class="b" style="left:466px;top:453px;" width="16" height="17" viewBox="0 0 16 17"><rect x="1.500" y="1.500" width="12" height="9" fill="none" stroke="#c4c4c4" stroke-width="1.200"/><path d="M7.500 3.500v5M5 6h5" stroke="#c4c4c4"/><path d="M0 1.500h3M12 1.500h3M0 10.500h3M12 10.500h3" stroke="#232323" stroke-width="0"/><path d="M9 13h6l-3 3.500z" fill="#c4c4c4"/></svg>
<div class="b" style="left:485px;top:451px;width:22px;height:20px;background:#14202e;"></div>
<svg class="b" style="left:487px;top:453px;" width="18" height="16" viewBox="0 0 18 16"><path d="M2.500 13.500l1.500-8 10-3 1 11z" fill="none" stroke="#3578c4" stroke-width="1.200"/><rect x="1.500" y="12.500" width="2" height="2" fill="#3578c4"/><rect x="3" y="4.500" width="2" height="2" fill="#3578c4"/><rect x="13" y="1.500" width="2" height="2" fill="#3578c4"/><rect x="14" y="12.500" width="2" height="2" fill="#3578c4"/></svg>
<div class="b" style="left:509px;top:452px;width:67px;height:18px;background:#1e1e1e;"></div>
<span class="t" style="left:516.2px;top:454px;font-size:11px;line-height:14px;color:#8e8e8e;letter-spacing:-0.11px;">0;00;10;11</span>
<svg class="b" style="left:580px;top:454px;" width="16" height="13" viewBox="0 0 16 13"><path d="M0.500 3h3.500l1.200-2h5.600l1.200 2h3.500v9.500h-15z" fill="#c4c4c4"/><circle cx="8" cy="7.500" r="3" fill="#232323"/><circle cx="8" cy="7.500" r="1.600" fill="#c4c4c4"/></svg>
<svg class="b" style="left:605px;top:454px;" width="13" height="13" viewBox="0 0 13 13"><circle cx="7.500" cy="3.500" r="2.600" fill="none" stroke="#3c3c3c" stroke-width="1.600"/><circle cx="5.500" cy="9" r="3" fill="none" stroke="#3c3c3c" stroke-width="1.600"/></svg>
<svg class="b" style="left:625px;top:452px;" width="16" height="18" viewBox="0 0 16 18"><circle cx="8" cy="4.500" r="3.800" fill="#e23a3a"/><circle cx="4.500" cy="9.500" r="3.800" fill="#38b44a"/><circle cx="11.500" cy="9.500" r="3.800" fill="#3a7ae0"/><circle cx="8" cy="8" r="1.800" fill="#e8e8e8"/><path d="M9 14h6l-3 3.500z" fill="#c4c4c4"/></svg>
<div class="b" style="left:645px;top:452px;width:84px;height:18px;background:#1e1e1e;"></div>
<span class="t" style="left:651px;top:454px;font-size:11px;line-height:14px;color:#b8b8b8;letter-spacing:0.13px;">(Треть)</span>
<svg class="b" style="left:714px;top:457px;" width="11" height="7" viewBox="0 0 11 7"><path d="M1 1.500l4.500 4 4.500-4" fill="none" stroke="#b8b8b8" stroke-width="1.300"/></svg>
<svg class="b" style="left:733px;top:453px;" width="16" height="15" viewBox="0 0 16 15"><rect x="0.700" y="0.700" width="13.600" height="12.600" fill="none" stroke="#c4c4c4" stroke-width="1.300"/><rect x="4" y="4" width="7" height="6" fill="#c4c4c4"/></svg>
<div class="b" style="left:752px;top:451px;width:21px;height:20px;background:#14202e;"></div>
<svg class="b" style="left:754px;top:454px;" width="17" height="14" viewBox="0 0 17 14"><rect x="0.500" y="0.500" width="16" height="13" fill="#12315a" stroke="#3578c4"/><path d="M1 1h4v3h-4zM9 1h4v3h-4zM5 4h4v3h-4zM13 4h3v3h-3zM1 7h4v3h-4zM9 7h4v3h-4zM5 10h4v3h-4zM13 10h3v3h-3z" fill="#2a66ad"/></svg>
<div class="b" style="left:776px;top:452px;width:103px;height:18px;background:#1e1e1e;"></div>
<span class="t" style="left:782.3px;top:454px;font-size:11px;line-height:14px;color:#b8b8b8;letter-spacing:-0.07px;">Активная ка...</span>
<svg class="b" style="left:864px;top:457px;" width="11" height="7" viewBox="0 0 11 7"><path d="M1 1.500l4.500 4 4.500-4" fill="none" stroke="#b8b8b8" stroke-width="1.300"/></svg>
<div class="b" style="left:883px;top:452px;width:68px;height:18px;background:#1e1e1e;"></div>
<span class="t" style="left:890.6px;top:454px;font-size:11px;line-height:14px;color:#b8b8b8;letter-spacing:0.08px;">1 вид</span>
<svg class="b" style="left:937px;top:457px;" width="11" height="7" viewBox="0 0 11 7"><path d="M1 1.500l4.500 4 4.500-4" fill="none" stroke="#b8b8b8" stroke-width="1.300"/></svg>
<svg class="b" style="left:955px;top:453px;" width="16" height="15" viewBox="0 0 16 15"><rect x="3.500" y="6.500" width="9" height="7" fill="none" stroke="#c4c4c4" stroke-width="1.200"/><path d="M1 2.500h14M1 2.500l2.500-2M1 2.500l2.500 2M15 2.500l-2.500-2M15 2.500l-2.500 2" stroke="#c4c4c4" fill="none"/></svg>
<svg class="b" style="left:977px;top:453px;" width="16" height="15" viewBox="0 0 16 15"><rect x="0.700" y="0.700" width="14" height="13" fill="none" stroke="#c4c4c4" stroke-width="1.300"/><path d="M8.500 2.500l-4 5.500h3l-1 4 4-5.500h-3z" fill="#c4c4c4"/><path d="M10 10.500h4l-2 2.500z" fill="#c4c4c4"/></svg>
<svg class="b" style="left:1000px;top:454px;" width="15" height="12" viewBox="0 0 15 12"><path d="M0.700 11.300v-9.600h3v3h2v-3h3.500v3h2v-3h3v9.600z" fill="none" stroke="#c4c4c4" stroke-width="1.200"/><path d="M4.700 5v4M7.500 5v4M10.200 5v4" stroke="#c4c4c4"/></svg>
<svg class="b" style="left:1021px;top:453px;" width="15" height="14" viewBox="0 0 15 14"><rect x="5" y="0.500" width="5" height="4" fill="#c4c4c4"/><rect x="0.500" y="9" width="5" height="4" fill="#c4c4c4"/><rect x="9.500" y="9" width="5" height="4" fill="#c4c4c4"/><path d="M7.500 4.500v2.500M3 9V7h9v2" stroke="#c4c4c4" fill="none" stroke-width="1.200"/></svg>
<svg class="b" style="left:1045px;top:453px;" width="12" height="15" viewBox="0 0 12 15"><circle cx="8" cy="7.500" r="5.500" fill="none" stroke="#c4c4c4" stroke-width="2.200"/><path d="M4 4l4 3.500M8 7.500l3 4" stroke="#c4c4c4" stroke-width="1.500"/></svg>
<div class="b" style="left:1056px;top:449px;width:2px;height:23px;background:#232323;"></div>
<div class="b" style="left:1061px;top:80px;width:214px;height:392px;background:#232323;"></div>
<div class="b" style="left:1272px;top:80px;width:15px;height:392px;background:#1f1f1f;"></div>
<div class="b" style="left:1275px;top:80px;width:9px;height:222px;background:#323232;border-radius:3px"></div>
<span class="t" style="left:1074.3px;top:87px;font-size:11px;line-height:14px;color:#a4a4a4;letter-spacing:0.02px;">Информация</span>
<div class="b" style="left:1061px;top:107px;width:211px;height:2px;background:#171717;"></div>
<span class="t" style="left:1074.3px;top:117px;font-size:11px;line-height:14px;color:#a4a4a4;letter-spacing:0.13px;">Аудио</span>
<div class="b" style="left:1061px;top:137px;width:211px;height:2px;background:#171717;"></div>
<span class="t" style="left:1074.3px;top:147px;font-size:11px;line-height:14px;color:#a4a4a4;letter-spacing:-0.08px;">Предпросмотр</span>
<div class="b" style="left:1061px;top:167px;width:211px;height:2px;background:#171717;"></div>
<span class="t" style="left:1074.3px;top:177px;font-size:11px;line-height:14px;color:#a4a4a4;letter-spacing:-0.13px;">Эффекты и шаблоны</span>
<div class="b" style="left:1061px;top:197px;width:211px;height:2px;background:#171717;"></div>
<span class="t" style="left:1074.3px;top:207px;font-size:11px;line-height:14px;color:#a4a4a4;letter-spacing:-0.07px;">Выровнять</span>
<div class="b" style="left:1061px;top:227px;width:211px;height:2px;background:#171717;"></div>
<span class="t" style="left:1074.3px;top:237px;font-size:11px;line-height:14px;color:#a4a4a4;letter-spacing:0.24px;">Библиотеки</span>
<div class="b" style="left:1061px;top:257px;width:211px;height:2px;background:#171717;"></div>
<span class="t" style="left:1074.3px;top:267px;font-size:11px;line-height:14px;color:#a4a4a4;letter-spacing:0.04px;">Символ</span>
<div class="b" style="left:1061px;top:287px;width:211px;height:2px;background:#171717;"></div>
<span class="t" style="left:1074.3px;top:297px;font-size:11px;line-height:14px;color:#a4a4a4;letter-spacing:-0.03px;">Абзац</span>
<div class="b" style="left:1061px;top:317px;width:211px;height:2px;background:#171717;"></div>
<span class="t" style="left:1074.3px;top:327px;font-size:11px;line-height:14px;color:#a4a4a4;letter-spacing:0.01px;">Инспектор</span>
<div class="b" style="left:1061px;top:347px;width:211px;height:2px;background:#171717;"></div>
<span class="t" style="left:1074.3px;top:357px;font-size:11px;line-height:14px;color:#a4a4a4;letter-spacing:0.08px;">Заливка с учетом содержимого</span>
<div class="b" style="left:1061px;top:377px;width:211px;height:2px;background:#171717;"></div>
<span class="t" style="left:1074.3px;top:387px;font-size:11px;line-height:14px;color:#a4a4a4;letter-spacing:0.15px;">Кисти</span>
<div class="b" style="left:1061px;top:407px;width:211px;height:2px;background:#171717;"></div>
<span class="t" style="left:1074.3px;top:417px;font-size:11px;line-height:14px;color:#d6d6d6;letter-spacing:0.06px;">Раскрасить</span>
<svg class="b" style="left:1255px;top:421px;" width="9" height="8" viewBox="0 0 9 8"><path d="M0 1h9M0 4h9M0 7h9" stroke="#c8c8c8" stroke-width="1"/></svg>
<span class="t" style="left:1070px;top:448px;font-size:11px;line-height:14px;color:#3e3e3e;letter-spacing:-0.17px;">Непрозрачн.:</span>
<span class="t" style="left:1144px;top:448px;font-size:11px;line-height:14px;color:#3e3e3e;letter-spacing:0.35px;">0 %</span>
<span class="t" style="left:1070px;top:466px;font-size:11px;line-height:14px;color:#3a3a3a;letter-spacing:-0.32px;">Характеристика:</span>
<span class="t" style="left:1156px;top:466px;font-size:11px;line-height:14px;color:#3a3a3a;letter-spacing:0.35px;">0 %</span>
<div class="b" style="left:1198px;top:452px;width:6px;height:6px;border-radius:3px;background:#3c3c3c"></div>
<span class="t" style="left:1196px;top:461px;font-size:9px;line-height:12px;color:#3e3e3e;letter-spacing:-0.01px;">13</span>
<div class="b" style="left:1229px;top:448px;width:26px;height:25px;background:#fb0000;border:1px solid #e8e8e8"></div>
<div class="b" style="left:1257px;top:462px;width:11px;height:11px;background:#ffffff;"></div>
<svg class="b" style="left:1257px;top:447px;" width="12" height="12" viewBox="0 0 12 12"><path d="M2 3.500h4.500a3.500 3.500 0 0 1 3.500 3.500v3" fill="none" stroke="#4a4a4a" stroke-width="1.300"/><path d="M3.500 1l-3 2.500 3 2.500zM7.500 8.500l2.500 3 2.500-3z" fill="#4a4a4a"/></svg>
<div class="b" style="left:1px;top:472px;width:1286px;height:348px;background:#0f1822;"></div>
<div class="b" style="left:1px;top:475px;width:1286px;height:345px;background:#0e2540;"></div>
<div class="b" style="left:2px;top:476px;width:1284px;height:343px;background:#6384a4;"></div>
<div class="b" style="left:3px;top:477px;width:1282px;height:341px;background:#10294a;"></div>
<div class="b" style="left:4px;top:478px;width:1280px;height:339px;background:#172738;"></div>
<div class="b" style="left:5px;top:479px;width:1278px;height:337px;background:#232323;"></div>
<span class="t" style="left:13.3px;top:483px;font-size:11px;line-height:14px;color:#8a8a8a;">×</span>
<div class="b" style="left:28px;top:484px;width:10px;height:10px;background:#c2aa88;"></div>
<span class="t" style="left:50.5px;top:483px;font-size:11px;line-height:14px;color:#d0d0d0;letter-spacing:-0.39px;">DSC_1778</span>
<svg class="b" style="left:111px;top:487px;" width="9" height="8" viewBox="0 0 9 8"><path d="M0 1h9M0 4h9M0 7h9" stroke="#c8c8c8" stroke-width="1"/></svg>
<div class="b" style="left:13px;top:500px;width:107px;height:2px;background:#c6c6c6;"></div>
<span class="t" style="left:158.3px;top:483px;font-size:11px;line-height:14px;color:#9c9c9c;letter-spacing:-0.09px;">Очередь рендеринга</span>
<span class="t" style="left:26px;top:506px;font-size:14px;line-height:18px;color:#3b8eea;font-weight:700;letter-spacing:0.57px;">0;00;10;11</span>
<span class="t" style="left:12.3px;top:523px;font-size:10px;line-height:13px;color:#1d477a;letter-spacing:0.31px;">00311 (29.97 кадр/с)</span>
<div class="b" style="left:126px;top:512px;width:207px;height:18px;background:#161616;border-radius:3px"></div>
<svg class="b" style="left:131px;top:514px;" width="17" height="14" viewBox="0 0 17 14"><circle cx="8" cy="5.500" r="3.600" fill="none" stroke="#b0b0b0" stroke-width="1.300"/><path d="M5.500 8.200L2 12" stroke="#b0b0b0" stroke-width="1.600"/><path d="M11.500 9h5l-2.500 3z" fill="#b0b0b0"/></svg>
<svg class="b" style="left:348px;top:513px;" width="20" height="16" viewBox="0 0 20 16"><path d="M0 4h8M8 4v8h6M8 8h6" stroke="#c4c4c4" fill="none" stroke-width="1.200"/><path d="M0 4l3-2v4z" fill="#c4c4c4"/><rect x="13" y="2" width="4" height="4" fill="#c4c4c4"/><rect x="13" y="6.500" width="4" height="3" fill="#c4c4c4"/><rect x="14" y="10.500" width="4" height="3" fill="#c4c4c4"/></svg>
<svg class="b" style="left:381px;top:511px;" width="20" height="20" viewBox="0 0 20 20"><path d="M5 0v10M0 5h10M1.500 1.500l7 7M8.500 1.500l-7 7" stroke="#c4c4c4" stroke-width="1"/><path d="M12 9l6 2.500v6l-6 2.500-6-2.500v-6z M6 11.500l6 2.500 6-2.500M12 14v6" fill="#232323" stroke="#c4c4c4" stroke-width="1.200"/></svg>
<svg class="b" style="left:417px;top:513px;" width="17" height="15" viewBox="0 0 17 15"><path d="M1.500 8a7 7 0 0 1 14 0z" fill="#c4c4c4"/><rect x="0.500" y="9" width="16" height="5" fill="#c4c4c4"/><path d="M8.500 3v9M3 9h11" stroke="#232323" stroke-width="1.200"/></svg>
<svg class="b" style="left:443px;top:512px;" width="16" height="17" viewBox="0 0 16 17"><rect x="3.500" y="0.500" width="12" height="12" fill="#c4c4c4"/><path d="M6 0.500v12M13 0.500v12M6 4h7M6 8h7" stroke="#232323"/><path d="M1 4v12h11" fill="none" stroke="#c4c4c4" stroke-width="1.400" stroke-dasharray="2 1"/></svg>
<svg class="b" style="left:469px;top:512px;" width="18" height="17" viewBox="0 0 18 17"><ellipse cx="10.500" cy="6" rx="6.500" ry="5" fill="#c4c4c4" transform="rotate(-30 10.500 6)"/><ellipse cx="7" cy="10" rx="6.500" ry="5" fill="none" stroke="#c4c4c4" stroke-width="1.300" transform="rotate(-30 7 10)"/></svg>
<svg class="b" style="left:503px;top:512px;" width="18" height="17" viewBox="0 0 18 17"><rect x="1" y="3" width="15" height="13" fill="none" stroke="#c4c4c4" stroke-width="1.200"/><path d="M3 6c6 0 5 8 11 8" fill="none" stroke="#c4c4c4" stroke-width="1.200"/><path d="M4 0v3M8.500 0v3M13 0v3" stroke="#c4c4c4"/></svg>
<div class="b" style="left:5px;top:538px;width:530px;height:1px;background:#161616;"></div>
<div class="b" style="left:5px;top:557px;width:530px;height:2px;background:#161616;"></div>
<svg class="b" style="left:7px;top:545px;" width="12" height="10" viewBox="0 0 12 10"><path d="M0.500 5q5.500-7 11 0q-5.500 7-11 0z" fill="#c4c4c4"/><circle cx="6" cy="5" r="2" fill="#232323"/></svg>
<svg class="b" style="left:22px;top:544px;" width="13" height="12" viewBox="0 0 13 12"><path d="M0.500 4h3l3.500-3.500v11l-3.500-3.500h-3z" fill="#c4c4c4"/><path d="M8.500 3.500q2 2.500 0 5M10.500 1.500q3.500 4.500 0 9" fill="none" stroke="#c4c4c4"/></svg>
<div class="b" style="left:40px;top:546px;width:7px;height:7px;border-radius:4px;background:#b8b8b8"></div>
<svg class="b" style="left:53px;top:543px;" width="11" height="13" viewBox="0 0 11 13"><rect x="0.500" y="5.500" width="10" height="7" fill="#c4c4c4"/><path d="M2.500 5.500v-2a3 3 0 0 1 6 0v2" fill="none" stroke="#c4c4c4" stroke-width="1.500"/><rect x="4.700" y="7.500" width="1.600" height="3" fill="#232323"/></svg>
<div class="b" style="left:70px;top:542px;width:1px;height:13px;background:#3a3a3a;"></div>
<div class="b" style="left:102px;top:542px;width:1px;height:13px;background:#3a3a3a;"></div>
<div class="b" style="left:135px;top:542px;width:1px;height:13px;background:#3a3a3a;"></div>
<div class="b" style="left:267px;top:542px;width:1px;height:13px;background:#3a3a3a;"></div>
<div class="b" style="left:404px;top:542px;width:1px;height:13px;background:#3a3a3a;"></div>
<div class="b" style="left:520px;top:542px;width:1px;height:13px;background:#3a3a3a;"></div>
<svg class="b" style="left:84px;top:543px;" width="13" height="13" viewBox="0 0 13 13"><path d="M1 2h5.500l6 6.200-4.600 4.300-6.900-6z" fill="#b4b4b4"/><circle cx="3.800" cy="4.500" r="1.100" fill="#232323"/></svg>
<span class="t" style="left:107.6px;top:543px;font-size:9px;line-height:12px;color:#9a9a9a;">#</span>
<span class="t" style="left:124px;top:544px;font-size:9px;line-height:12px;color:#9a9a9a;">.</span>
<span class="t" style="left:141px;top:543px;font-size:10px;line-height:13px;color:#9a9a9a;letter-spacing:-0.29px;">Имя источника</span>
<svg class="b" style="left:271px;top:544px;" width="13" height="12" viewBox="0 0 13 12"><path d="M1 6.500a5.500 5.500 0 0 1 11 0z" fill="none" stroke="#c4c4c4" stroke-width="1.100"/><path d="M0 8.500h13M6.500 3v8M3.500 11h6" stroke="#c4c4c4" stroke-width="1.100"/></svg>
<svg class="b" style="left:286px;top:544px;" width="11" height="12" viewBox="0 0 11 12"><circle cx="5.500" cy="6" r="2.300" fill="#c4c4c4"/><path d="M5.500 0.500v11M0 6h11M1.600 2.100l7.800 7.800M9.400 2.100l-7.800 7.800" stroke="#c4c4c4" stroke-width="1"/></svg>
<svg class="b" style="left:299px;top:544px;" width="11" height="12" viewBox="0 0 11 12"><path d="M1 1l9 10" stroke="#c4c4c4" stroke-width="1.600" stroke-dasharray="2 1.200"/></svg>
<span class="t" style="left:314px;top:541px;font-size:12px;line-height:16px;color:#c0c0c0;font-style:italic;font-family:"Liberation Serif",serif;">fx</span>
<svg class="b" style="left:330px;top:544px;" width="12" height="12" viewBox="0 0 12 12"><rect x="0.500" y="0.500" width="11" height="11" fill="#c4c4c4"/><path d="M3 0.500v11M9 0.500v11M3 4h6M3 8h6" stroke="#232323"/></svg>
<svg class="b" style="left:345px;top:543px;" width="14" height="14" viewBox="0 0 14 14"><circle cx="8.500" cy="5.500" r="4.500" fill="#c4c4c4"/><circle cx="5.500" cy="8.500" r="4.500" fill="none" stroke="#c4c4c4" stroke-width="1.200"/></svg>
<svg class="b" style="left:361px;top:544px;" width="12" height="12" viewBox="0 0 12 12"><circle cx="6" cy="6" r="5.300" fill="none" stroke="#c4c4c4" stroke-width="1.200"/><path d="M2.200 9.800a5.300 5.300 0 0 1 7.600-7.600z" fill="#c4c4c4"/></svg>
<svg class="b" style="left:376px;top:543px;" width="13" height="14" viewBox="0 0 13 14"><path d="M6.500 1l5.500 2.500v7l-5.500 2.500-5.500-2.500v-7z M1 3.500l5.500 2.500 5.500-2.500M6.500 6v7" fill="none" stroke="#c4c4c4" stroke-width="1.200"/></svg>
<span class="t" style="left:408.4px;top:543px;font-size:10px;line-height:13px;color:#9a9a9a;letter-spacing:-0.47px;">Родительский элемент ...</span>
<div class="b" style="left:5px;top:559px;width:530px;height:17px;background:#414141;"></div>
<div class="b" style="left:6px;top:559px;width:14px;height:17px;background:#2c2c2c;"></div>
<div class="b" style="left:21px;top:559px;width:14px;height:17px;background:#2c2c2c;"></div>
<div class="b" style="left:36px;top:559px;width:14px;height:17px;background:#2c2c2c;"></div>
<div class="b" style="left:51px;top:559px;width:14px;height:17px;background:#2c2c2c;"></div>
<div class="b" style="left:66px;top:559px;width:1px;height:17px;background:#2c2c2c;"></div>
<svg class="b" style="left:7px;top:562px;" width="12" height="10" viewBox="0 0 12 10"><path d="M0.500 5q5.500-7 11 0q-5.500 7-11 0z" fill="#c4c4c4"/><circle cx="6" cy="5" r="2" fill="#2c2c2c"/></svg>
<svg class="b" style="left:22px;top:561px;" width="13" height="12" viewBox="0 0 13 12"><path d="M0.500 4h3l3.500-3.500v11l-3.500-3.500h-3z" fill="#c4c4c4"/><path d="M8.500 3.500q2 2.500 0 5M10.500 1.500q3.500 4.500 0 9" fill="none" stroke="#c4c4c4"/></svg>
<svg class="b" style="left:75px;top:563px;" width="6" height="9" viewBox="0 0 6 9"><path d="M1 1l3.500 3.500-3.500 3.500" fill="none" stroke="#9a9a9a" stroke-width="1.200"/></svg>
<div class="b" style="left:88px;top:561px;width:12px;height:12px;background:#a6d2cd;"></div>
<span class="t" style="left:110px;top:560px;font-size:11px;line-height:14px;color:#b8b8b8;">1</span>
<svg class="b" style="left:139px;top:560px;" width="13" height="15" viewBox="0 0 13 15"><path d="M1 3.500l10.500-2.500.7 2.500-10.500 2.500z" fill="#e0e0e0"/><rect x="1.500" y="6" width="10.500" height="8" fill="#e8e8e8"/><rect x="3" y="8" width="3" height="4.500" fill="#333"/><rect x="7" y="8" width="3.500" height="4.500" fill="#c04040"/></svg>
<div class="b" style="left:154px;top:559px;width:111px;height:17px;background:#adadad;"></div>
<span class="t" style="left:158.9px;top:560px;font-size:11px;line-height:14px;color:#121212;letter-spacing:-0.21px;">DSC_1778.MOV</span>
<div class="b" style="left:297px;top:559px;width:15px;height:17px;background:#2c2c2c;"></div>
<div class="b" style="left:330px;top:559px;width:13px;height:17px;background:#333333;"></div>
<div class="b" style="left:345px;top:559px;width:13px;height:17px;background:#333333;"></div>
<div class="b" style="left:360px;top:559px;width:13px;height:17px;background:#333333;"></div>
<div class="b" style="left:375px;top:559px;width:13px;height:17px;background:#333333;"></div>
<svg class="b" style="left:271px;top:561px;" width="13" height="12" viewBox="0 0 13 12"><path d="M1 6.500a5.500 5.500 0 0 1 11 0z" fill="none" stroke="#c4c4c4" stroke-width="1.100"/><path d="M0 8.500h13M6.500 3v8M3.500 11h6" stroke="#c4c4c4" stroke-width="1.100"/></svg>
<svg class="b" style="left:301px;top:561px;" width="13" height="13" viewBox="0 0 13 13"><path d="M1.500 11.500l10-10" stroke="#c4c4c4" stroke-width="1.500"/></svg>
<svg class="b" style="left:407px;top:560px;" width="14" height="14" viewBox="0 0 14 14"><path d="M7.0 7.6 L6.7 7.7 L6.4 7.6 L6.1 7.4 L5.9 7.1 L5.8 6.6 L6.0 6.1 L6.3 5.7 L6.8 5.4 L7.4 5.4 L8.1 5.5 L8.6 6.0 L9.0 6.6 L9.2 7.4 L9.0 8.2 L8.4 9.0 L7.6 9.5 L6.7 9.7 L5.6 9.5 L4.7 8.9 L4.1 7.9 L3.8 6.8 L4.0 5.6 L4.7 4.5 L5.7 3.7 L7.0 3.3 L8.4 3.5 L9.7 4.2 L10.6 5.3 L11.1 6.7 L11.1 8.3 L10.4 9.8 L9.2 11.0 L7.6 11.6 L5.8 11.6 L4.1 11.0 L2.8 9.7 L2.0 8.0 L1.8 6.0 L2.5 4.1 L3.8 2.6" fill="none" stroke="#a8a8a8" stroke-width="1.200"/></svg>
<div class="b" style="left:427px;top:560px;width:88px;height:15px;background:#232323;"></div>
<span class="t" style="left:433.6px;top:560px;font-size:11px;line-height:14px;color:#c8c8c8;letter-spacing:-0.11px;">Нет</span>
<svg class="b" style="left:502px;top:564px;" width="10" height="7" viewBox="0 0 10 7"><path d="M1 1l4 4 4-4" fill="none" stroke="#b8b8b8" stroke-width="1.300"/></svg>
<div class="b" style="left:535px;top:503px;width:1px;height:298px;background:#050505;"></div>
<div class="b" style="left:536px;top:503px;width:1px;height:298px;background:#1c1c1c;"></div>
<div class="b" style="left:537px;top:508px;width:733px;height:1px;background:#0e0e0e;"></div>
<div class="b" style="left:537px;top:509px;width:733px;height:10px;background:#101010;"></div>
<div class="b" style="left:537px;top:510px;width:732px;height:8px;background:#2d8ceb;border-radius:4px"></div>
<div class="b" style="left:543px;top:510px;width:719px;height:8px;background:#606060;"></div>
<div class="b" style="left:537px;top:519px;width:733px;height:1px;background:#0e0e0e;"></div>
<span class="t" style="left:538px;top:520px;font-size:10px;line-height:13px;color:#b0b0b0;letter-spacing:0.27px;">:00s</span>
<span class="t" style="left:623.6px;top:520px;font-size:10px;line-height:13px;color:#b0b0b0;letter-spacing:0.03px;">02s</span>
<span class="t" style="left:712.3px;top:520px;font-size:10px;line-height:13px;color:#b0b0b0;letter-spacing:-0.01px;">04s</span>
<span class="t" style="left:801px;top:520px;font-size:10px;line-height:13px;color:#b0b0b0;letter-spacing:-0.04px;">06s</span>
<span class="t" style="left:889px;top:520px;font-size:10px;line-height:13px;color:#b0b0b0;letter-spacing:0.06px;">08s</span>
<span class="t" style="left:978px;top:520px;font-size:10px;line-height:13px;color:#b0b0b0;letter-spacing:-0.07px;">10s</span>
<span class="t" style="left:1067px;top:520px;font-size:10px;line-height:13px;color:#b0b0b0;letter-spacing:0.16px;">12s</span>
<span class="t" style="left:1156px;top:520px;font-size:10px;line-height:13px;color:#b0b0b0;letter-spacing:0.26px;">14s</span>
<span class="t" style="left:1245px;top:520px;font-size:10px;line-height:13px;color:#b0b0b0;letter-spacing:0.23px;">16s</span>
<div class="b" style="left:632px;top:534px;width:1px;height:4px;background:#8a8a8a;"></div>
<div class="b" style="left:721px;top:534px;width:1px;height:4px;background:#8a8a8a;"></div>
<div class="b" style="left:810px;top:534px;width:1px;height:4px;background:#8a8a8a;"></div>
<div class="b" style="left:898px;top:534px;width:1px;height:4px;background:#8a8a8a;"></div>
<div class="b" style="left:987px;top:534px;width:1px;height:4px;background:#8a8a8a;"></div>
<div class="b" style="left:1076px;top:534px;width:1px;height:4px;background:#8a8a8a;"></div>
<div class="b" style="left:1164px;top:534px;width:1px;height:4px;background:#8a8a8a;"></div>
<div class="b" style="left:1253px;top:534px;width:1px;height:4px;background:#8a8a8a;"></div>
<div class="b" style="left:537px;top:538px;width:733px;height:1px;background:#0e0e0e;"></div>
<div class="b" style="left:537px;top:540px;width:731px;height:14px;background:#2d8ceb;border-radius:3px"></div>
<div class="b" style="left:543px;top:540px;width:719px;height:14px;background:#636363;"></div>
<div class="b" style="left:537px;top:555px;width:733px;height:4px;background:#101010;"></div>
<svg class="b" style="left:1272px;top:541px;" width="13" height="14" viewBox="0 0 13 14"><path d="M0.500 0.500h11v8l-5.500 5-5.500-5z" fill="#bdbdbd"/></svg>
<div class="b" style="left:537px;top:559px;width:5px;height:241px;background:#222222;"></div>
<div class="b" style="left:542px;top:559px;width:720px;height:241px;background:#2f2f2f;"></div>
<div class="b" style="left:1262px;top:559px;width:21px;height:241px;background:#262626;"></div>
<div class="b" style="left:537px;top:559px;width:6px;height:17px;background:#444444;"></div>
<div class="b" style="left:543px;top:559px;width:718px;height:17px;background:#9cc6be;"></div>
<svg class="b" style="left:543px;top:559px" width="718" height="17"><defs><filter id="trn" x="0" y="0" width="100%" height="100%"><feTurbulence type="fractalNoise" baseFrequency="0.5" numOctaves="2" seed="5"/><feColorMatrix type="matrix" values="0 0 0 0 0.36  0 0 0 0 0.52  0 0 0 0 0.49  1.2 1.2 0 0 -0.9"/></filter></defs><rect width="718" height="17" filter="url(#trn)" opacity="0.45"/></svg>
<div class="b" style="left:543px;top:559px;width:718px;height:1px;background:#d4e8e4;"></div>
<div class="b" style="left:543px;top:559px;width:1px;height:17px;background:#d4e8e4;"></div>
<div class="b" style="left:543px;top:575px;width:718px;height:1px;background:#7fa49d;"></div>
<div class="b" style="left:1261px;top:559px;width:7px;height:17px;background:#8a8a8a;"></div>
<svg class="b" style="left:543px;top:559px;" width="5" height="5" viewBox="0 0 5 5"><path d="M0 0h4l-4 4z" fill="#1a1a1a"/></svg>
<svg class="b" style="left:1270px;top:561px;" width="15" height="12" viewBox="0 0 15 12"><path d="M1 6l5-5v3h8v5h-8v2z" fill="none" stroke="#c8c8c8" stroke-width="1.200"/><circle cx="7" cy="8" r="2.500" fill="#262626" stroke="#c8c8c8"/></svg>
<div class="b" style="left:1003px;top:519px;width:1px;height:281px;background:#4a90d8;"></div>
<div class="b" style="left:1003px;top:509px;width:1px;height:10px;background:#7aa6d8;"></div>
<svg class="b" style="left:998px;top:523px;" width="12" height="14" viewBox="0 0 12 14"><path d="M0.500 0.500h11v7l-5.500 6-5.500-6z" fill="#2d8ceb"/><path d="M2 3h8" stroke="#1a5aa0" stroke-width="1"/></svg>
<div class="b" style="left:5px;top:802px;width:530px;height:14px;background:#232323;"></div>
<div class="b" style="left:537px;top:800px;width:746px;height:16px;background:#242424;"></div>
<div class="b" style="left:535px;top:802px;width:110px;height:14px;background:#232323;"></div>
<div class="b" style="left:5px;top:801px;width:637px;height:1px;background:#111111;"></div>
<svg class="b" style="left:8px;top:803px;" width="13" height="13" viewBox="0 0 13 13"><rect x="0.500" y="0.500" width="8" height="8" fill="#1a3a5a" stroke="#3d8fe6"/><rect x="4.500" y="4.500" width="8" height="8" fill="#1a3a5a" stroke="#3d8fe6"/></svg>
<svg class="b" style="left:26px;top:803px;" width="13" height="13" viewBox="0 0 13 13"><circle cx="5" cy="5" r="4" fill="none" stroke="#c4c4c4" stroke-width="1.200"/><rect x="5.500" y="5.500" width="7" height="7" fill="#232323" stroke="#c4c4c4" stroke-width="1.200"/></svg>
<svg class="b" style="left:45px;top:803px;" width="11" height="13" viewBox="0 0 11 13"><path d="M1 2q2 2 2 4.500t-2 4.500M10 2q-2 2-2 4.500t2 4.500" fill="none" stroke="#c4c4c4" stroke-width="1.200"/><rect x="3" y="1" width="5" height="11" fill="#c4c4c4"/></svg>
<span class="t" style="left:267.2px;top:803px;font-size:10px;line-height:13px;color:#9a9a9a;letter-spacing:0.63px;">Перекл. выключ./режимы</span>
<svg class="b" style="left:541px;top:805px;" width="11" height="8" viewBox="0 0 11 8"><path d="M0.500 7l3-3 2 1.500 1.500-2 3.500 3.500z" fill="#c8c8c8"/></svg>
<div class="b" style="left:570px;top:809px;width:41px;height:2px;background:#3a3a3a;"></div>
<div class="b" style="left:562px;top:805px;width:10px;height:10px;border-radius:5px;border:2px solid #b8b8b8;background:#232323"></div>
<svg class="b" style="left:621px;top:805px;" width="18" height="8" viewBox="0 0 18 8"><path d="M0 7.500l5.500-6 3 2.800 2.500-4 6.500 7.200z" fill="#c8c8c8"/></svg>
<svg class="b" style="left:18px;top:710px" width="395" height="96" viewBox="18 710 395 96">
<g opacity="0.960">
<rect x="21" y="715.500" width="99" height="79" rx="10" fill="#8e8e8e" stroke="#5c5c5c" stroke-width="1.500"/>
<rect x="25.500" y="720" width="90" height="70" rx="7.500" fill="#606060"/>
<rect x="30.500" y="725" width="79" height="60" rx="5" fill="#9d9d9d"/>
<path d="M51 795.500v5.500M85 795.500v5.500" stroke="#777" stroke-width="1.500"/>
<rect x="54.500" y="796" width="27" height="5.500" rx="2" fill="#9a9a9a"/>
<path d="M70.500 762.500L46 739" stroke="#585858" stroke-width="5.500" stroke-linecap="round"/>
<path d="M35.500 729l21 6-14.500 13z" fill="#585858"/>
<defs><filter id="wmo" x="-5%" y="-10%" width="110%" height="125%"><feMorphology in="SourceAlpha" operator="dilate" radius="1.700" result="d"/><feGaussianBlur in="d" stdDeviation="0.500" result="db"/><feFlood flood-color="#686868"/><feComposite in2="db" operator="in" result="o"/><feMerge><feMergeNode in="o"/><feMergeNode in="o"/><feMergeNode in="SourceGraphic"/></feMerge></filter></defs>
<text x="127.500" y="776" font-family="'Liberation Sans',sans-serif" font-size="54" lengthAdjust="spacing" stroke-linejoin="round" stroke-linecap="round" stroke-width="2.500" filter="url(#wmo)" textLength="80" fill="#b6495c" stroke="#b6495c">OS</text>
<text x="222" y="776" font-family="'Liberation Sans',sans-serif" font-size="54" lengthAdjust="spacing" stroke-linejoin="round" stroke-linecap="round" stroke-width="2.500" filter="url(#wmo)" textLength="184" fill="#9e9e9e" stroke="#9e9e9e">Helper</text>
</g></svg>
<svg class="b" style="left:840px;top:515px" width="200" height="200" viewBox="840 515 200 200">
<defs><filter id="ash" x="-20%" y="-20%" width="140%" height="140%"><feGaussianBlur stdDeviation="2.500"/></filter>
<linearGradient id="agr" x1="0" y1="1" x2="1" y2="0"><stop offset="0" stop-color="#f8413c"/><stop offset="1" stop-color="#f0443e"/></linearGradient></defs>
<g id="arw">
<path d="M1002 531L900 577L942 588L869 673a12 12 0 0 0 18 16L958 602L976 640Z" fill="#000" opacity="0.550" filter="url(#ash)" transform="translate(-2 3)"/>
<path d="M1002 531L900 577L942 588L869 673a12 12 0 0 0 18 16L958 602L976 640Z" fill="url(#agr)"/>
</g></svg>
<div class="b" style="left:0px;top:474px;width:1px;height:347px;background:#74879a;"></div>
<div class="b" style="left:1287px;top:474px;width:1px;height:347px;background:#74879a;"></div>
<div class="b" style="left:0px;top:820px;width:1288px;height:1px;background:#74879a;"></div>
</div>
</body></html>
